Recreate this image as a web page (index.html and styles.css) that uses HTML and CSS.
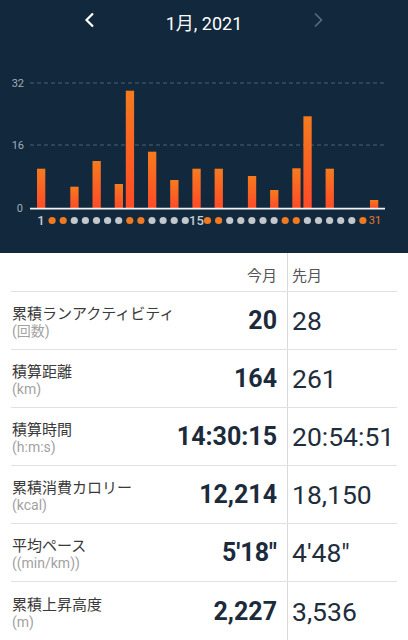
FILE: index.html
```html
<!DOCTYPE html>
<html>
	<head>
		<meta charset="utf-8" />
		<title>月間レポート</title>
		<link rel="stylesheet" href="styles.css">
	</head>
	<body>
		<div class="top">
			<div class="nav">
				<svg class="chev" width="12" height="16" viewBox="0 0 12 16"><path d="M9 1.5 L2.5 8 L9 14.5" fill="none" stroke="#fff" stroke-width="2.2"/></svg>
				<span class="title">1月, 2021</span>
				<svg class="chev" width="12" height="16" viewBox="0 0 12 16"><path d="M3 1.5 L9.5 8 L3 14.5" fill="none" stroke="#5d6d7c" stroke-width="1.6"/></svg>
			</div>
			<!-- 座標はページ座標のまま -->
			<svg class="chart" width="408" height="209" viewBox="0 44 408 209">
				<defs>
					<linearGradient id="bar" x1="0" y1="0" x2="0" y2="1">
						<stop offset="0" stop-color="#f57b1f"/>
						<stop offset="1" stop-color="#ff4b26"/>
					</linearGradient>
				</defs>
				<line x1="30" y1="83" x2="384" y2="83" class="grid"/>
				<line x1="30" y1="145" x2="384" y2="145" class="grid"/>
				<text x="24" y="87" class="ylab">32</text>
				<text x="24" y="149" class="ylab">16</text>
				<text x="23" y="212" class="ylab">0</text>

				<g fill="url(#bar)">
					<rect x="37" y="168.7" width="8.3" height="39.3"/>
					<rect x="70.3" y="186.7" width="8.3" height="21.3"/>
					<rect x="92.5" y="161" width="8.3" height="47"/>
					<rect x="114.7" y="184" width="8.3" height="24"/>
					<rect x="125.8" y="90.7" width="8.3" height="117.3"/>
					<rect x="148" y="151.7" width="8.3" height="56.3"/>
					<rect x="170.2" y="180" width="8.3" height="28"/>
					<rect x="192.4" y="168.7" width="8.3" height="39.3"/>
					<rect x="214.6" y="168.7" width="8.3" height="39.3"/>
					<rect x="247.9" y="176" width="8.3" height="32"/>
					<rect x="270.1" y="190" width="8.3" height="18"/>
					<rect x="292.3" y="168.3" width="8.3" height="39.7"/>
					<rect x="303.4" y="116.3" width="8.3" height="91.7"/>
					<rect x="325.6" y="168.7" width="8.3" height="39.3"/>
					<rect x="370" y="200" width="8.3" height="8"/>
				</g>
				<line x1="30" y1="208.6" x2="385" y2="208.6" class="base"/>

				<text x="41" y="225" class="day">1</text>
				<text x="196.4" y="225" class="day">15</text>
				<text x="375" y="224" class="day end">31</text>
				<g class="dots">
					<circle cx="52.1" cy="220.5" r="3.6" class="we"/>
					<circle cx="63.2" cy="220.5" r="3.6" class="we"/>
					<circle cx="74.3" cy="220.5" r="3.6"/>
					<circle cx="85.4" cy="220.5" r="3.6"/>
					<circle cx="96.5" cy="220.5" r="3.6"/>
					<circle cx="107.6" cy="220.5" r="3.6"/>
					<circle cx="118.7" cy="220.5" r="3.6"/>
					<circle cx="129.8" cy="220.5" r="3.6" class="we"/>
					<circle cx="140.9" cy="220.5" r="3.6" class="we"/>
					<circle cx="152" cy="220.5" r="3.6"/>
					<circle cx="163.1" cy="220.5" r="3.6"/>
					<circle cx="174.2" cy="220.5" r="3.6"/>
					<circle cx="185.3" cy="220.5" r="3.6"/>
					<circle cx="207.5" cy="220.5" r="3.6" class="we"/>
					<circle cx="218.6" cy="220.5" r="3.6" class="we"/>
					<circle cx="229.7" cy="220.5" r="3.6"/>
					<circle cx="240.8" cy="220.5" r="3.6"/>
					<circle cx="251.9" cy="220.5" r="3.6"/>
					<circle cx="263" cy="220.5" r="3.6"/>
					<circle cx="274.1" cy="220.5" r="3.6"/>
					<circle cx="285.2" cy="220.5" r="3.6" class="we"/>
					<circle cx="296.3" cy="220.5" r="3.6" class="we"/>
					<circle cx="307.4" cy="220.5" r="3.6"/>
					<circle cx="318.5" cy="220.5" r="3.6"/>
					<circle cx="329.6" cy="220.5" r="3.6"/>
					<circle cx="340.7" cy="220.5" r="3.6"/>
					<circle cx="351.8" cy="220.5" r="3.6"/>
					<circle cx="362.9" cy="220.5" r="3.6" class="we"/>
				</g>
			</svg>
		</div>

		<div class="stats">
			<div class="row head">
				<div class="cur"><span class="hd">今月</span></div>
				<div class="prev"><span class="hd">先月</span></div>
			</div>
			<div class="row">
				<div class="cur">
					<div class="name"><div class="label">累積ランアクティビティ</div><div class="unit">(回数)</div></div>
					<span class="val">20</span>
				</div>
				<div class="prev">28</div>
			</div>
			<div class="row">
				<div class="cur">
					<div class="name"><div class="label">積算距離</div><div class="unit">(km)</div></div>
					<span class="val">164</span>
				</div>
				<div class="prev">261</div>
			</div>
			<div class="row">
				<div class="cur">
					<div class="name"><div class="label">積算時間</div><div class="unit">(h:m:s)</div></div>
					<span class="val">14:30:15</span>
				</div>
				<div class="prev">20:54:51</div>
			</div>
			<div class="row">
				<div class="cur">
					<div class="name"><div class="label">累積消費カロリー</div><div class="unit">(kcal)</div></div>
					<span class="val">12,214</span>
				</div>
				<div class="prev">18,150</div>
			</div>
			<div class="row">
				<div class="cur">
					<div class="name"><div class="label">平均ペース</div><div class="unit">((min/km))</div></div>
					<span class="val">5'18"</span>
				</div>
				<div class="prev">4'48"</div>
			</div>
			<div class="row last">
				<div class="cur">
					<div class="name"><div class="label">累積上昇高度</div><div class="unit">(m)</div></div>
					<span class="val">2,227</span>
				</div>
				<div class="prev">3,536</div>
			</div>
		</div>
	</body>
</html>
```

FILE: styles.css
```css
body{
	margin:0;
	background:#fff;
	font-family: Roboto, "Noto Sans CJK JP", sans-serif;
}
.top{
	background:#12283c;
	height:253px;
}
.nav{
	height:44px;
	display:flex;
	align-items:center;
	justify-content:center;
	gap:70px;
}
.chev{
	display:block;
	margin-top:-4px;
}
.title{
	color:#fff;
	font-size:18px;
}
.chart{
	display:block;
}
.grid{
	stroke:#4c6074;
	stroke-width:1;
	stroke-dasharray:4 3;
}
.base{
	stroke:#f2f4f6;
	stroke-width:1.6;
}
.ylab{
	font-family: Roboto, sans-serif;
	font-size:11px;
	fill:#a3adb7;
	text-anchor:end;
}
.day{
	font-family: Roboto, sans-serif;
	font-size:13px;
	font-weight:500;
	fill:#c6cbd0;
	text-anchor:middle;
}
.day.end{
	font-size:11px;
	font-weight:normal;
	fill:#e8792b;
}
.dots circle{
	fill:#c3c8cd;
}
.dots circle.we{
	fill:#f07a22;
}

/* 集計テーブル */
.stats{
	margin:0 11px;
}
.row{
	display:grid;
	grid-template-columns:277px 1fr;
	height:58px;
	box-sizing:border-box;
	border-bottom:1px solid #e1e1e1;
}
.row.head{
	height:39px;
}
.row.last{
	border-bottom:0;
}
.cur{
	display:flex;
	align-items:center;
	padding:0 10px 0 1px;
	border-right:1px solid #dadada;
	box-sizing:border-box;
}
.head .cur,.head .prev{
	align-items:flex-end;
	justify-content:flex-end;
	padding-bottom:6px;
}
.head .prev{
	justify-content:flex-start;
}
.hd{
	font-size:15px;
	line-height:18px;
	color:#555;
}
.name{
	flex:1;
	padding-top:4px;
}
.label{
	font-size:15px;
	line-height:18px;
	color:#3a3a3a;
}
.unit{
	font-size:14px;
	line-height:17px;
	color:#a2a2a2;
}
.val{
	font-size:25px;
	font-weight:bold;
	color:#1b2b3b;
}
.prev{
	display:flex;
	align-items:center;
	padding-left:4px;
	font-size:26.5px;
	color:#1f2e3d;
}
```
